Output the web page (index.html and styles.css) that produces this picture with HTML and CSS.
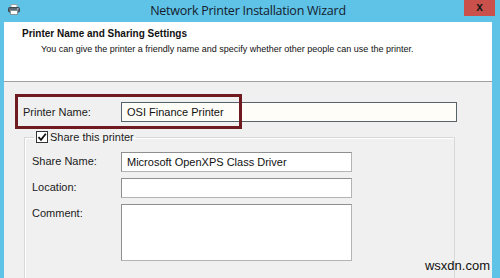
FILE: index.html
```html
<!DOCTYPE html>
<html>
  <head>
    <link rel="stylesheet" href="styles.css">
  </head>
  <body>
    <div class="window">
      <div class="titlebar">
        <svg class="app-icon" width="12" height="11" viewBox="0 0 12 11">
          <rect x="3" y="0.5" width="6" height="3" fill="#ffffff" stroke="#9aa4ab" stroke-width="1"/>
          <rect x="0.5" y="3.5" width="11" height="4.5" rx="1" fill="#5d6a73" stroke="#3e4a52" stroke-width="1"/>
          <rect x="2.5" y="6.5" width="7" height="4" fill="#ffffff" stroke="#8a949a" stroke-width="1"/>
          <rect x="9" y="4.5" width="1.5" height="1" fill="#d0e6f0"/>
        </svg>
        <div class="title">Network Printer Installation Wizard</div>
        <div class="close">x</div>
      </div>
      <div class="client">
        <div class="header">
          <div class="header-title">Printer Name and Sharing Settings</div>
          <div class="header-sub">You can give the printer a friendly name and specify whether other people can use the printer.</div>
        </div>
        <div class="content">
          <div class="name-row">
            <span class="label">Printer Name:</span>
            <div class="field field-name">OSI Finance Printer</div>
            <div class="highlight"></div>
          </div>
          <fieldset class="share">
            <legend>
              <span class="check">
                <svg width="10" height="10" viewBox="0 0 10 10">
                  <path d="M1.5 5.2 L4 7.8 L8.8 1.8" fill="none" stroke="#111" stroke-width="1.8"/>
                </svg>
              </span>
              Share this printer
            </legend>
            <div class="row">
              <span class="label">Share Name:</span>
              <div class="field">Microsoft OpenXPS Class Driver</div>
            </div>
            <div class="row">
              <span class="label">Location:</span>
              <div class="field"></div>
            </div>
            <div class="row">
              <span class="label">Comment:</span>
              <div class="field field-comment"></div>
            </div>
          </fieldset>
        </div>
      </div>
      <div class="watermark">wsxdn.com</div>
    </div>
  </body>
</html>
```

FILE: styles.css
```css
html, body {
  margin: 0;
  padding: 0;
  overflow: hidden;
}

body {
  width: 500px;
  height: 278px;
  font-family: "Liberation Sans", Arial, sans-serif;
  color: #1b1b1b;
}

.window {
  position: relative;
  display: flex;
  flex-direction: column;
  width: 500px;
  height: 278px;
  background: #5fc3e7;
  overflow: hidden;
}

.titlebar {
  display: flex;
  align-items: flex-start;
  height: 22px;
  flex: none;
}

.app-icon {
  margin: 4px 0 0 8px;
}

.title {
  flex: 1;
  text-align: center;
  font-family: "Open Sans", sans-serif;
  font-size: 12.5px;
  letter-spacing: -0.25px;
  line-height: 21px;
  color: #14202e;
  padding-left: 12px;
}

.close {
  width: 31px;
  height: 16px;
  margin-right: 5px;
  background: #c9504b;
  color: #1a1a1a;
  font-family: "Liberation Sans", sans-serif;
  font-weight: bold;
  font-size: 12px;
  line-height: 14px;
  text-align: center;
}

.client {
  flex: 1;
  margin: 0 8px 0 4px;
  background: #f0f0f0;
  display: flex;
  flex-direction: column;
}

.header {
  height: 60px;
  background: #ffffff;
  border-bottom: 1px solid #a0a0a0;
  padding: 5px 0 0 18px;
  box-sizing: border-box;
  flex: none;
}

.header-title {
  font-weight: bold;
  font-size: 10px;
  line-height: 14px;
  color: #111;
}

.header-sub {
  font-size: 9px;
  line-height: 13px;
  margin-top: 2px;
  padding-left: 19px;
  color: #111;
}

.content {
  padding: 20px 0 0 19px;
}

.label {
  font-size: 11px;
  color: #1b1b1b;
}

.name-row {
  position: relative;
  display: flex;
  align-items: center;
  height: 20px;
}

.name-row .label {
  width: 98px;
  flex: none;
}

.field {
  box-sizing: border-box;
  height: 20px;
  width: 231px;
  background: #ffffff;
  border: 1px solid #8f8f8f;
  border-right-color: #b4b4b4;
  border-bottom-color: #b4b4b4;
  font-size: 11px;
  line-height: 18px;
  padding-left: 5px;
  color: #111;
}

.field-name {
  width: 336px;
  background: #fffdf7;
  border-color: #56636b;
}

.field-comment {
  height: 57px;
}

.highlight {
  position: absolute;
  left: -8px;
  top: -8px;
  width: 227px;
  height: 35px;
  box-sizing: border-box;
  border: 3px solid #6e1a20;
}

.share {
  margin: 8px 0 0 1px;
  width: 431px;
  box-sizing: border-box;
  border: 1px solid #d8d8d8;
  box-shadow: inset 1px 1px 0 #ffffff;
  padding: 8px 0 60px 7px;
}

.share legend {
  display: flex;
  align-items: center;
  padding: 0 2px;
  margin-left: 2px;
  font-size: 11px;
  line-height: 14px;
}

.check {
  display: inline-flex;
  align-items: center;
  justify-content: center;
  box-sizing: border-box;
  width: 12px;
  height: 12px;
  border: 1px solid #333;
  background: #fff;
  margin-right: 2px;
}

.row {
  display: flex;
  align-items: flex-start;
  margin-bottom: 6px;
}

.row + .row + .row {
  margin-top: 3px;
}

.row .label {
  width: 89px;
  flex: none;
  padding-top: 3px;
}

.watermark {
  position: absolute;
  right: 10px;
  bottom: 5px;
  font-family: "Liberation Sans", sans-serif;
  font-size: 13px;
  color: #111;
}
```
